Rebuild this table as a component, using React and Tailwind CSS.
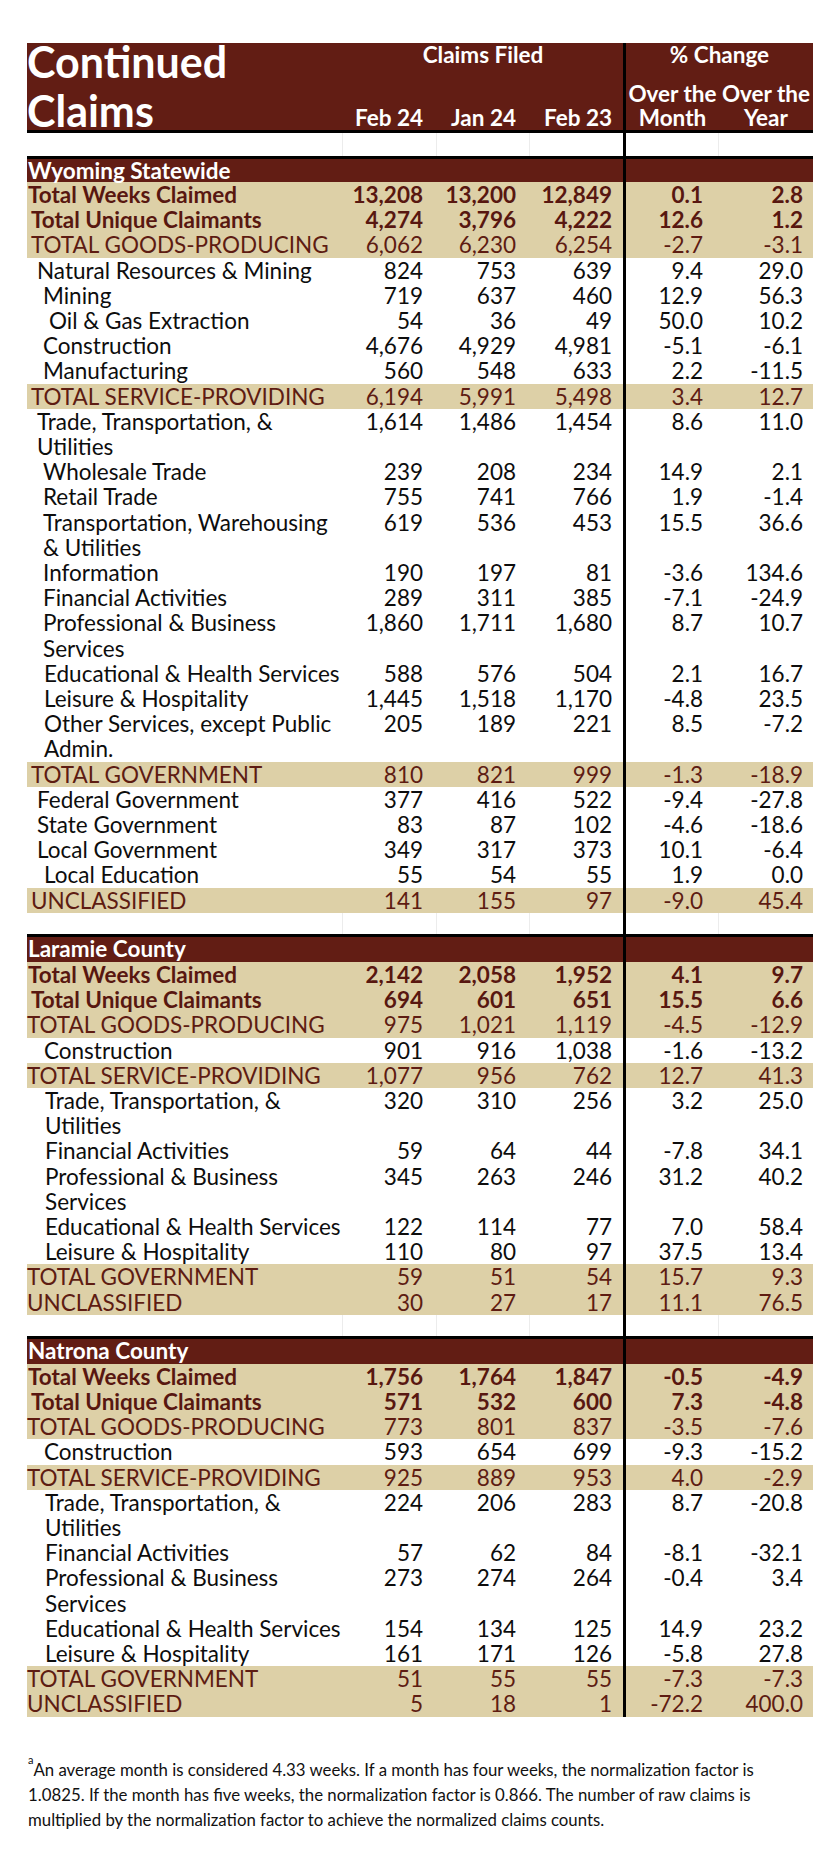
import React from 'react';

const COLS = 'grid grid-cols-[316px_94px_93px_96px_93px_94px]';
const PL = {
  0: 'pl-0',
  1: 'pl-[1px]',
  4: 'pl-[4px]',
  10: 'pl-[10px]',
  16: 'pl-[16px]',
  17: 'pl-[17px]',
  18: 'pl-[18px]',
  22: 'pl-[22px]',
};
const VAL = ['pr-[14px]', 'pr-[14px]', 'pr-[11px] border-r-[3px] border-black', 'pr-[16px]', 'pr-[10px]'];

const wyoming = [
  ['Total Weeks Claimed', '13,208', '13,200', '12,849', '0.1', '2.8', 'b', 1],
  ['Total Unique Claimants', '4,274', '3,796', '4,222', '12.6', '1.2', 'b', 4],
  ['TOTAL GOODS-PRODUCING', '6,062', '6,230', '6,254', '-2.7', '-3.1', 't', 4],
  ['Natural Resources & Mining', '824', '753', '639', '9.4', '29.0', 'p', 10],
  ['Mining', '719', '637', '460', '12.9', '56.3', 'p', 16],
  ['Oil & Gas Extraction', '54', '36', '49', '50.0', '10.2', 'p', 22],
  ['Construction', '4,676', '4,929', '4,981', '-5.1', '-6.1', 'p', 16],
  ['Manufacturing', '560', '548', '633', '2.2', '-11.5', 'p', 16],
  ['TOTAL SERVICE-PROVIDING', '6,194', '5,991', '5,498', '3.4', '12.7', 't', 4],
  ['Trade, Transportation, &|Utilities', '1,614', '1,486', '1,454', '8.6', '11.0', 'p', 10],
  ['Wholesale Trade', '239', '208', '234', '14.9', '2.1', 'p', 16],
  ['Retail Trade', '755', '741', '766', '1.9', '-1.4', 'p', 16],
  ['Transportation, Warehousing|& Utilities', '619', '536', '453', '15.5', '36.6', 'p', 16],
  ['Information', '190', '197', '81', '-3.6', '134.6', 'p', 16],
  ['Financial Activities', '289', '311', '385', '-7.1', '-24.9', 'p', 16],
  ['Professional & Business|Services', '1,860', '1,711', '1,680', '8.7', '10.7', 'p', 16],
  ['Educational & Health Services', '588', '576', '504', '2.1', '16.7', 'p', 17],
  ['Leisure & Hospitality', '1,445', '1,518', '1,170', '-4.8', '23.5', 'p', 17],
  ['Other Services, except Public|Admin.', '205', '189', '221', '8.5', '-7.2', 'p', 17],
  ['TOTAL GOVERNMENT', '810', '821', '999', '-1.3', '-18.9', 't', 4],
  ['Federal Government', '377', '416', '522', '-9.4', '-27.8', 'p', 10],
  ['State Government', '83', '87', '102', '-4.6', '-18.6', 'p', 10],
  ['Local Government', '349', '317', '373', '10.1', '-6.4', 'p', 10],
  ['Local Education', '55', '54', '55', '1.9', '0.0', 'p', 17],
  ['UNCLASSIFIED', '141', '155', '97', '-9.0', '45.4', 't', 4],
];

const laramie = [
  ['Total Weeks Claimed', '2,142', '2,058', '1,952', '4.1', '9.7', 'b', 1],
  ['Total Unique Claimants', '694', '601', '651', '15.5', '6.6', 'b', 4],
  ['TOTAL GOODS-PRODUCING', '975', '1,021', '1,119', '-4.5', '-12.9', 't', 0],
  ['Construction', '901', '916', '1,038', '-1.6', '-13.2', 'p', 17],
  ['TOTAL SERVICE-PROVIDING', '1,077', '956', '762', '12.7', '41.3', 't', 0],
  ['Trade, Transportation, &|Utilities', '320', '310', '256', '3.2', '25.0', 'p', 18],
  ['Financial Activities', '59', '64', '44', '-7.8', '34.1', 'p', 18],
  ['Professional & Business|Services', '345', '263', '246', '31.2', '40.2', 'p', 18],
  ['Educational & Health Services', '122', '114', '77', '7.0', '58.4', 'p', 18],
  ['Leisure & Hospitality', '110', '80', '97', '37.5', '13.4', 'p', 18],
  ['TOTAL GOVERNMENT', '59', '51', '54', '15.7', '9.3', 't', 0],
  ['UNCLASSIFIED', '30', '27', '17', '11.1', '76.5', 't', 0],
];

const natrona = [
  ['Total Weeks Claimed', '1,756', '1,764', '1,847', '-0.5', '-4.9', 'b', 1],
  ['Total Unique Claimants', '571', '532', '600', '7.3', '-4.8', 'b', 4],
  ['TOTAL GOODS-PRODUCING', '773', '801', '837', '-3.5', '-7.6', 't', 0],
  ['Construction', '593', '654', '699', '-9.3', '-15.2', 'p', 17],
  ['TOTAL SERVICE-PROVIDING', '925', '889', '953', '4.0', '-2.9', 't', 0],
  ['Trade, Transportation, &|Utilities', '224', '206', '283', '8.7', '-20.8', 'p', 18],
  ['Financial Activities', '57', '62', '84', '-8.1', '-32.1', 'p', 18],
  ['Professional & Business|Services', '273', '274', '264', '-0.4', '3.4', 'p', 18],
  ['Educational & Health Services', '154', '134', '125', '14.9', '23.2', 'p', 18],
  ['Leisure & Hospitality', '161', '171', '126', '-5.8', '27.8', 'p', 18],
  ['TOTAL GOVERNMENT', '51', '55', '55', '-7.3', '-7.3', 't', 0],
  ['UNCLASSIFIED', '5', '18', '1', '-72.2', '400.0', 't', 0],
];

function Row({ r }) {
  const [label, ...rest] = r;
  const vals = rest.slice(0, 5);
  const kind = rest[5];
  const pl = rest[6];
  const tone =
    kind === 'p'
      ? 'text-[#0d0d0d]'
      : kind === 'b'
        ? 'bg-[#ddd0a7] text-[#581710] font-bold'
        : 'bg-[#ddd0a7] text-[#5e1c12]';
  const lines = label.split('|');
  return (
    <div className={`${COLS} leading-[25.2px] ${tone}`}>
      <div className={`${PL[pl]} whitespace-nowrap`}>
        {lines.map((l, i) => (
          <div key={i}>{l}</div>
        ))}
      </div>
      {vals.map((v, i) => (
        <div key={i} className={`text-right ${VAL[i]}`}>{v}</div>
      ))}
    </div>
  );
}

function Gap({ h }) {
  return (
    <div className={`${COLS} ${h}`}>
      <div className="border-r border-[#ececec]" />
      <div className="border-r border-[#ececec]" />
      <div className="border-r border-[#ececec]" />
      <div className="border-r-[3px] border-black" />
      <div className="border-r border-[#ececec]" />
      <div />
    </div>
  );
}

function Section({ title, rows, head }) {
  return (
    <div>
      <div className={`${COLS} ${head} bg-[#621d14] border-t-[3px] border-black text-white font-bold leading-[24px]`}>
        <div className="pl-[1px] whitespace-nowrap">{title}</div>
        <div />
        <div />
        <div className="border-r-[3px] border-black" />
        <div />
        <div />
      </div>
      {rows.map((r, i) => (
        <Row key={i} r={r} />
      ))}
    </div>
  );
}

export default function App() {
  return (
    <div className="w-[840px] min-h-[1863px] bg-white pt-[43px] pl-[27px] font-['Lato',sans-serif] text-[22.5px]">
      <div className="w-[786px]">
        {/* Header */}
        <div className="h-[90px] bg-[#621d14] border-b-[3px] border-black flex text-white font-bold">
          <div className="w-[316px] text-[43px] leading-[49px] mt-[-6px]">
            <div>Continued</div>
            <div>Claims</div>
          </div>
          <div className="w-[283px] border-r-[3px] border-black flex flex-col leading-[24px]">
            <div className="h-[24px] text-center">Claims Filed</div>
            <div className="mt-auto flex h-[24px]">
              <div className="w-[94px] text-right pr-[14px]">Feb 24</div>
              <div className="w-[93px] text-right pr-[14px]">Jan 24</div>
              <div className="w-[93px] text-right pr-[11px]">Feb 23</div>
            </div>
          </div>
          <div className="w-[187px] flex flex-col leading-[24px]">
            <div className="h-[24px] text-center">% Change</div>
            <div className="mt-auto flex h-[24px]">
              <div className="w-[93px] flex justify-center whitespace-nowrap">Over the</div>
              <div className="w-[94px] flex justify-center whitespace-nowrap">Over the</div>
            </div>
            <div className="flex h-[24px]">
              <div className="w-[93px] text-center">Month</div>
              <div className="w-[94px] text-center">Year</div>
            </div>
          </div>
        </div>

        <Gap h="h-[23px]" />
        <Section title="Wyoming Statewide" rows={wyoming} head="h-[26px]" />
        <Gap h="h-[21px]" />
        <Section title="Laramie County" rows={laramie} head="h-[28px]" />
        <Gap h="h-[21px]" />
        <Section title="Natrona County" rows={natrona} head="h-[28px]" />

        {/* Footnote */}
        <p className="mt-[40px] pl-[1px] text-[16.8px] leading-[25px] text-[#111] whitespace-nowrap">
          <sup className="text-[11px] align-[6px]">a</sup>An average month is considered 4.33 weeks. If a month has four weeks, the normalization factor is
          <br />
          1.0825. If the month has five weeks, the normalization factor is 0.866. The number of raw claims is
          <br />
          multiplied by the normalization factor to achieve the normalized claims counts.
        </p>
      </div>
    </div>
  );
}
